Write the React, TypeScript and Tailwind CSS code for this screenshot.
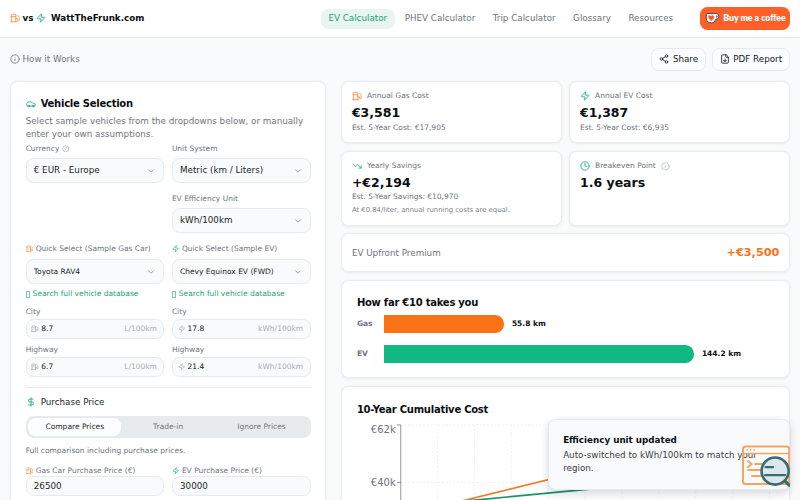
import React from "react";
import { Fuel, Zap, Info, Share2, FileDown, Car, CircleHelp, ChevronDown, DollarSign, TrendingDown, Clock } from "lucide-react";

const NAV = ["EV Calculator", "PHEV Calculator", "Trip Calculator", "Glossary", "Resources"];

function Card({ className = "", children }: { className?: string; children?: React.ReactNode }) {
  return (
    <div className={`rounded-xl border border-[#e9edf1] bg-white shadow-[0_1px_4px_rgba(15,23,42,0.07)] ${className}`}>
      {children}
    </div>
  );
}

function Select({ value, small = false }: { value: string; small?: boolean }) {
  return (
    <div className="flex h-10 items-center justify-between rounded-xl border border-[#e6eaee] bg-[#f9fafc] px-[11.4px] text-[#1c1f24]">
      <span className={small ? "text-xs" : "text-sm"}>{value}</span>
      <ChevronDown className="size-4 text-[#8a8f96]" />
    </div>
  );
}

function Consumption({ label, value, unit, ev = false }: { label: string; value: string; unit: string; ev?: boolean }) {
  const Icon = ev ? Zap : Fuel;
  return (
    <div className="flex flex-col gap-1">
      <span className="text-xs text-[#6f747b]">{label}</span>
      <div className="flex h-8 items-center rounded-xl border border-[#e6eaee] bg-[#f9fafc] pr-[10.4px] pl-[7.4px] text-xs">
        <Icon className="-mt-px size-3 text-[#a5a9ae]" />
        <span className="ml-1 text-[#16181c]">{value}</span>
        <span className="ml-auto text-[#a9adb2]">{unit}</span>
      </div>
    </div>
  );
}

function FieldLabel({ ev, children }: { ev: boolean; children: React.ReactNode }) {
  return (
    <div className="flex items-center gap-1 text-xs text-[#6f747b]">
      {ev ? <Zap className="-mt-0.5 size-3 text-[#17a57a]" /> : <Fuel className="-mt-0.5 size-3 text-[#f58a3c]" />}
      <span>{children}</span>
    </div>
  );
}

function VehicleColumn({ ev = false }: { ev?: boolean }) {
  const unit = ev ? "kWh/100km" : "L/100km";
  return (
    <div>
      <FieldLabel ev={ev}>{ev ? "Quick Select (Sample EV)" : "Quick Select (Sample Gas Car)"}</FieldLabel>
      <div className="mt-2">
        <Select small value={ev ? "Chevy Equinox EV (FWD)" : "Toyota RAV4"} />
      </div>
      <div className="mt-2 flex h-4 items-center gap-1 text-xs whitespace-nowrap text-[#1d9f78]">
        <span className="ml-[0.6px] h-[11.2px] w-[6.4px] rounded-[1px] border border-[#1d9f78]/60" />
        <span>Search full vehicle database</span>
      </div>
      <div className="mt-[12px] flex flex-col gap-[9px]">
        <Consumption label="City" value={ev ? "17.8" : "8.7"} unit={unit} ev={ev} />
        <Consumption label="Highway" value={ev ? "21.4" : "6.7"} unit={unit} ev={ev} />
      </div>
    </div>
  );
}

function PriceInput({ label, value, ev = false }: { label: string; value: string; ev?: boolean }) {
  return (
    <div>
      <FieldLabel ev={ev}>{label}</FieldLabel>
      <div className="flex h-8 items-center rounded-xl border border-[#e6eaee] bg-[#f9fafc] px-[11.4px] text-sm text-[#1c1f24]">{value}</div>
    </div>
  );
}

function Stat({ icon, label, value, sub, note, info = false }: { icon: React.ReactNode; label: string; value: string; sub?: string; note?: string; info?: boolean }) {
  return (
    <Card className="p-[15.4px]">
      <div className="flex items-center gap-2 text-xs text-[#6f747b]">
        {icon}
        <span>{label}</span>
        {info && <Info className="size-3.5 text-[#b0b4b9]" />}
      </div>
      <div className="mt-1 text-xl font-bold text-[#0c0e12]">{value}</div>
      {sub && <div className="mt-0.5 text-xs text-[#6f747b]">{sub}</div>}
      {note && <div className="mt-1 text-[11px] leading-[16.5px] text-[#7d8289]">{note}</div>}
    </Card>
  );
}

function Bar({ label, value, width, color }: { label: string; value: string; width: number; color: string }) {
  return (
    <div className="flex h-7 items-center text-xs font-bold">
      <span className="w-11 text-[#6f747b]">{label}</span>
      <div className={`h-7 rounded-r-[14px] ${color}`} style={{ width }} />
      <span className="ml-3 text-[#0c0e12]">{value}</span>
    </div>
  );
}

function CostChart() {
  const xs = Array.from({ length: 10 }, (_, i) => 129 + i * 59);
  return (
    <svg width="668" height="160" viewBox="0 0 668 160" className="-mt-px block font-['DejaVu_Sans']">
      {xs.map((x) => (
        <line key={x} x1={x} x2={x} y1="11" y2="160" stroke="#e3e5e8" strokeDasharray="3 3" />
      ))}
      <line x1="70" x2="660" y1="11" y2="11" stroke="#e3e5e8" strokeDasharray="3 3" />
      <line x1="70" x2="660" y1="103" y2="103" stroke="#e3e5e8" strokeDasharray="3 3" />
      <path d="M64 11H70V160M64 103H70" fill="none" stroke="#85888c" strokeWidth="1.4" />
      <text x="62" y="24" textAnchor="end" fontSize="16" fill="#6f747b">€62k</text>
      <text x="62" y="109" textAnchor="end" fontSize="16" fill="#6f747b">€40k</text>
      <path d="M70 157L660 11" fill="none" stroke="#ee7d2b" strokeWidth="2.700" />
      <path d="M70 142.600L660 86.500" fill="none" stroke="#16936b" strokeWidth="2.700" />
    </svg>
  );
}

export default function App() {
  return (
    <div className="relative h-[800px] w-[1280px] overflow-hidden bg-[#f9fafc] font-['DejaVu_Sans',sans-serif] [zoom:0.625]">
      <header className="flex h-[61px] items-center border-b border-[#e3e7ec] bg-white px-4 text-sm">
        <div className="flex items-center gap-1 font-bold text-[#0c0e12]">
          <Fuel className="-mt-0.5 size-4 text-[#f58a3c]" />
          <span>vs</span>
          <Zap className="-mt-0.5 size-4 text-[#17a57a]" />
          <span className="ml-1">WattTheFrunk.com</span>
        </div>
        <nav className="ml-auto flex gap-1 text-[#6f747b]">
          {NAV.map((n, i) => (
            <span key={n} className={i === 0 ? "rounded-xl bg-[#e8f5f1] px-3 py-1.5 text-[#1d9f78]" : "px-3 py-1.5"}>
              {n}
            </span>
          ))}
        </nav>
        <div className="ml-[31px] flex h-9 w-36 items-center rounded-xl bg-[#ff6029] pl-2 text-white">
          <svg viewBox="0 0 24 20" className="h-5 w-6">
            <path d="M3 2.500H17.500C24 2.500 23.500 11.500 17 11.800C16 16 13.500 17.500 10.500 17.500C5 17.500 2 14.500 2 10V3.500Z" fill="#fff" stroke="#4a3a40" strokeWidth="1.500" />
            <path d="M18 5.500C21 5.500 21 9 18 9Z" fill="#4a3a40" />
            <path d="M10 14.500L6 10.300C3.300 6.500 8 3.500 10 6.500C12 3.500 16.700 6.500 14 10.300Z" fill="#ff5a2c" />
          </svg>
          <span className="ml-[5px] font-['Lato'] text-[14px] font-extrabold whitespace-nowrap">Buy me a coffee</span>
        </div>
      </header>

      <main className="flex flex-col gap-4 px-4 pt-4">
        <div className="flex items-center gap-[9px] text-sm">
          <div className="mr-auto flex items-center gap-1 text-[#6f747b]">
            <Info className="size-4" />
            <span>How it Works</span>
          </div>
          {[
            { Icon: Share2, label: "Share" },
            { Icon: FileDown, label: "PDF Report" },
          ].map(({ Icon, label }) => (
            <div key={label} className="flex h-9 items-center gap-1.5 rounded-xl border border-[#e6eaee] bg-[#fcfdfe] px-[11px] text-[#16181c]">
              <Icon className="size-4" />
              <span>{label}</span>
            </div>
          ))}
        </div>

        <div className="grid grid-cols-12 items-start gap-6">
          <Card className="col-span-5 h-[760px] p-[23.4px]">
            <div className="flex items-center gap-2">
              <Car className="size-4 text-[#17a57a]" />
              <h2 className="text-base font-bold tracking-tight text-[#0c0e12]">Vehicle Selection</h2>
            </div>
            <p className="mt-1.5 text-sm text-[#6f747b]">
              Select sample vehicles from the dropdowns below, or manually enter your own assumptions.
            </p>
            <div className="mt-[7px] grid grid-cols-2 gap-x-3 gap-y-[18px] text-xs text-[#6f747b]">
              <div className="flex flex-col gap-1.5">
                <div className="flex items-center gap-1">
                  <span>Currency</span>
                  <CircleHelp className="-mt-0.5 size-3 text-[#a5a9ae]" />
                </div>
                <Select value="€ EUR - Europe" />
              </div>
              <div className="flex flex-col gap-1.5">
                <span>Unit System</span>
                <Select value="Metric (km / Liters)" />
              </div>
              <div className="col-start-2 flex flex-col gap-1.5">
                <span>EV Efficiency Unit</span>
                <Select value="kWh/100km" />
              </div>
            </div>
            <div className="mt-[18px] grid grid-cols-2 gap-3">
              <VehicleColumn />
              <VehicleColumn ev />
            </div>
            <div className="mt-4 border-t border-[#e9edf1] pt-3">
              <div className="flex items-center gap-2 text-sm text-[#1c1f24]">
                <DollarSign className="size-4 text-[#17a57a]" />
                <span>Purchase Price</span>
              </div>
              <div className="mt-3 grid h-9 grid-cols-3 rounded-xl bg-[#e8ebee] p-1 text-center text-xs leading-7 text-[#6f747b]">
                <span className="rounded-xl bg-[#fcfdfe] text-[#1c1f24]">Compare Prices</span>
                <span>Trade-in</span>
                <span>Ignore Prices</span>
              </div>
              <p className="mt-3 text-xs text-[#6f747b]">Full comparison including purchase prices.</p>
              <div className="mt-4 grid grid-cols-2 gap-3">
                <PriceInput label="Gas Car Purchase Price (€)" value="26500" />
                <PriceInput label="EV Purchase Price (€)" value="30000" ev />
              </div>
            </div>
          </Card>

          <div className="col-span-7 flex flex-col gap-3">
            <div className="grid grid-cols-2 gap-3">
              <Stat icon={<Fuel className="size-4 text-[#f58a3c]" />} label="Annual Gas Cost" value="€3,581" sub="Est. 5-Year Cost: €17,905" />
              <Stat icon={<Zap className="size-4 text-[#17a57a]" />} label="Annual EV Cost" value="€1,387" sub="Est. 5-Year Cost: €6,935" />
              <Stat
                icon={<TrendingDown className="size-4 text-[#22b573]" />}
                label="Yearly Savings"
                value="+€2,194"
                sub="Est. 5-Year Savings: €10,970"
                note="At €0.84/liter, annual running costs are equal."
              />
              <Stat icon={<Clock className="size-4 text-[#17a57a]" />} label="Breakeven Point" value="1.6 years" info />
            </div>
            <Card className="flex items-center justify-between p-[15.4px]">
              <span className="text-sm text-[#6f747b]">EV Upfront Premium</span>
              <span className="text-lg font-bold text-[#f97316]">+€3,500</span>
            </Card>
            <Card className="p-[23.4px]">
              <h2 className="text-base font-bold tracking-tight text-[#0c0e12]">How far €10 takes you</h2>
              <div className="mt-2 flex flex-col gap-5">
                <Bar label="Gas" value="55.8 km" width={192} color="bg-[#f97316]" />
                <Bar label="EV" value="144.2 km" width={496} color="bg-[#10b981]" />
              </div>
            </Card>
            <Card className="h-[240px] overflow-hidden p-[23.4px]">
              <h2 className="text-base font-bold tracking-tight text-[#0c0e12]">10-Year Cumulative Cost</h2>
              <div className="mt-[3px]">
                <CostChart />
              </div>
            </Card>
          </div>
        </div>
      </main>

      <div className="absolute right-4 bottom-4 w-[388px] rounded-xl border border-[#e6eaee] bg-[#f9fafc] p-[23.4px] text-sm shadow-[0_6px_14px_rgba(15,23,42,0.16)]">
        <div className="font-bold text-[#0c0e12]">Efficiency unit updated</div>
        <div className="mt-1 text-[#3c4046]">Auto-switched to kWh/100km to match your region.</div>
      </div>

      <svg viewBox="0 0 48 43" className="absolute right-4 bottom-[19px] h-[69px] w-[77px]">
        <g fill="none" stroke="#f3a561" strokeWidth="2" strokeLinecap="round">
          <rect x="1" y="1.500" width="46" height="37.500" rx="2.500" />
          <path d="M1 8.500H47M5 5H5.200M8.500 5H8.700M12 5H12.200" strokeWidth="1.500" />
          <path d="M6 16L9.500 19L6 22M13 19H20M6 25H19M10 31H19" />
        </g>
        <circle cx="33" cy="26" r="13.500" fill="#dce7eb" stroke="#3a6b73" strokeWidth="2.600" />
        <path d="M23.500 22H31M23 30H43" stroke="#3a6b73" strokeWidth="2.200" strokeLinecap="round" />
        <path d="M43 36L48 41" stroke="#3a6b73" strokeWidth="3" />
      </svg>
    </div>
  );
}
